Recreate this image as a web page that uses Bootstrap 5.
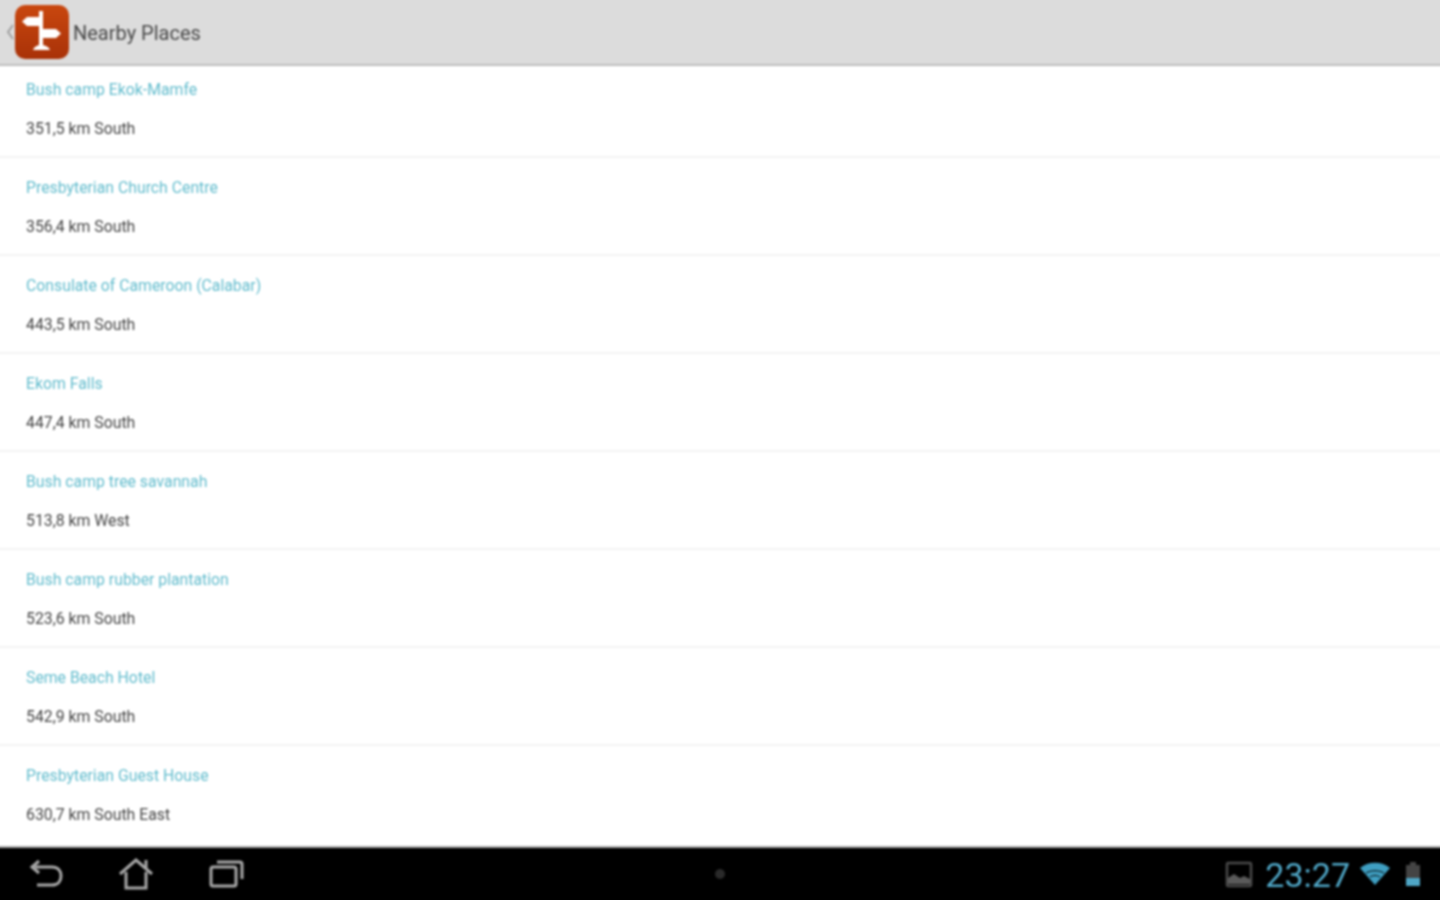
<!DOCTYPE html>
<html lang="en">
<head>
  <meta charset="UTF-8" />
  <title>Nearby Places</title>
  <link href="https://cdn.jsdelivr.net/npm/bootstrap@5.3.3/dist/css/bootstrap.min.css" rel="stylesheet" />
  <style>
    html, body { height: 900px; overflow: hidden; }
    body { font-family: Roboto, "Liberation Sans", sans-serif; background: #fff; }
    /* soft look of the upscaled screenshot; 4px bleed so the blur doesn't fade at the window edge */
    .app-shell { height: 908px; margin: -4px; filter: blur(.8px); }
    .action-bar { height: 70px; background: #dcdcdc; border-bottom: 2px solid #bdbdbd; padding: 4px 0 0 9px; }
    .back-caret { width: 10px; }
    .app-logo { width: 54px; height: 54px; margin-top: -1px; }
    .bar-title { font-size: 20px; color: #484848; margin-left: 4px; margin-top: 1px; }
    .place-row { height: 98px; padding: 20px 30px 0; border-bottom: 2px solid #f3f3f3; }
    .place-row:first-child { height: 92px; padding-top: 14px; }
    .place-row:last-child { border-bottom: 0; }
    .place-name { font-size: 15.8px; line-height: 20px; color: #62bccd; }
    .place-dist { font-size: 15.8px; line-height: 20px; color: #444; margin-top: 19px; }
    .sys-bar { height: 58px; background: #000; border-top: 2px solid #a8a8a8; padding-bottom: 4px; }
    .sys-side { flex: 1 1 600px; }
    .nav-icons { padding-left: 31px; gap: 52px; }
    .sys-dot { width: 10px; height: 10px; border-radius: 50%; background: #2a2a2a; }
    .sys-clock { font-size: 34px; line-height: 40px; color: #4fa6c6; margin: 2px 10px 0 12px; }
    .tray { padding-right: 22px; }
    .tray-batt { margin-left: 14px; }
  </style>
</head>
<body>
  <div class="app-shell d-flex flex-column">
    <div class="action-bar d-flex align-items-center flex-shrink-0">
      <svg class="back-caret" viewBox="0 0 10 20" height="20"><path d="M8 3 3 10l5 7" fill="none" stroke="#a0a0a0" stroke-width="2"/></svg>
      <svg class="app-logo" viewBox="0 0 54 54">
        <defs>
          <linearGradient id="logoFill" x1="0" y1="0" x2="0" y2="1">
            <stop offset="0" stop-color="#c9470f"/>
            <stop offset="1" stop-color="#a93208"/>
          </linearGradient>
        </defs>
        <rect width="54" height="54" rx="10" fill="url(#logoFill)"/>
        <path d="M24 6h4v36h-4z" fill="#fff"/>
        <path d="M18 45c1-3 4-5 8-5s8 2 9 5z" fill="#fff"/>
        <path d="M12 12h15v9H12l-5-4.500z" fill="#fff"/>
        <path d="M25 24h16l5 4.500-5 4.500H25z" fill="#fff"/>
      </svg>
      <span class="bar-title">Nearby Places</span>
    </div>

    <div class="flex-grow-1 overflow-hidden" id="places"></div>

    <div class="sys-bar d-flex align-items-center flex-shrink-0">
      <div class="sys-side nav-icons d-flex align-items-center">
        <svg width="38" height="38" viewBox="0 0 38 38" fill="none" stroke="#a8a8a8" stroke-width="3"><path d="M8 12h17c6 0 9 4 9 9s-3 9-9 9H10"/><path d="M12 6 5 12l7 6"/></svg>
        <svg width="38" height="38" viewBox="0 0 38 38" fill="none" stroke="#a8a8a8" stroke-width="3"><path d="M3 19 19 5l16 14"/><path d="M9 17v16h20V17"/><path d="M29 5v8"/></svg>
        <svg width="38" height="38" viewBox="0 0 38 38" fill="none" stroke="#a8a8a8" stroke-width="3"><rect x="4" y="12" width="25" height="19" rx="2"/><path d="M10 7h23a2 2 0 0 1 2 2v15"/></svg>
      </div>
      <div class="sys-dot"></div>
      <div class="sys-side tray d-flex align-items-center justify-content-end">
        <svg width="28" height="28" viewBox="0 0 28 28"><rect x="2" y="3" width="24" height="23" rx="1" fill="none" stroke="#4a4a4a" stroke-width="2.500"/><path d="M3 24v-6l6-4 6 4 4-2 6 3v5z" fill="#5a5a5a"/></svg>
        <span class="sys-clock">23:27</span>
        <svg width="30" height="24" viewBox="0 0 30 24"><path d="M0 6C8-1 22-1 30 6L15 23z" fill="#3f9fc2"/><path d="M6 11c5-3 13-3 18 0M10 15c3-2 7-2 10 0" stroke="#000" stroke-width="1" fill="none"/></svg>
        <svg class="tray-batt" width="18" height="26" viewBox="0 0 18 26"><path d="M6 1h6v3h4v21H2V4h4z" fill="#444"/><path d="M2 17h14v8H2z" fill="#4fa6c6"/></svg>
      </div>
    </div>
  </div>

  <script>
    const places = [
      ["Bush camp Ekok-Mamfe", "351,5 km South"],
      ["Presbyterian Church Centre", "356,4 km South"],
      ["Consulate of Cameroon (Calabar)", "443,5 km South"],
      ["Ekom Falls", "447,4 km South"],
      ["Bush camp tree savannah", "513,8 km West"],
      ["Bush camp rubber plantation", "523,6 km South"],
      ["Seme Beach Hotel", "542,9 km South"],
      ["Presbyterian Guest House", "630,7 km South East"]
    ];
    document.getElementById("places").innerHTML = places.map(p => `
      <div class="place-row">
        <div class="place-name">${p[0]}</div>
        <div class="place-dist">${p[1]}</div>
      </div>`).join("");
  </script>
  <script src="https://cdn.jsdelivr.net/npm/bootstrap@5.3.3/dist/js/bootstrap.bundle.min.js"></script>
</body>
</html>
